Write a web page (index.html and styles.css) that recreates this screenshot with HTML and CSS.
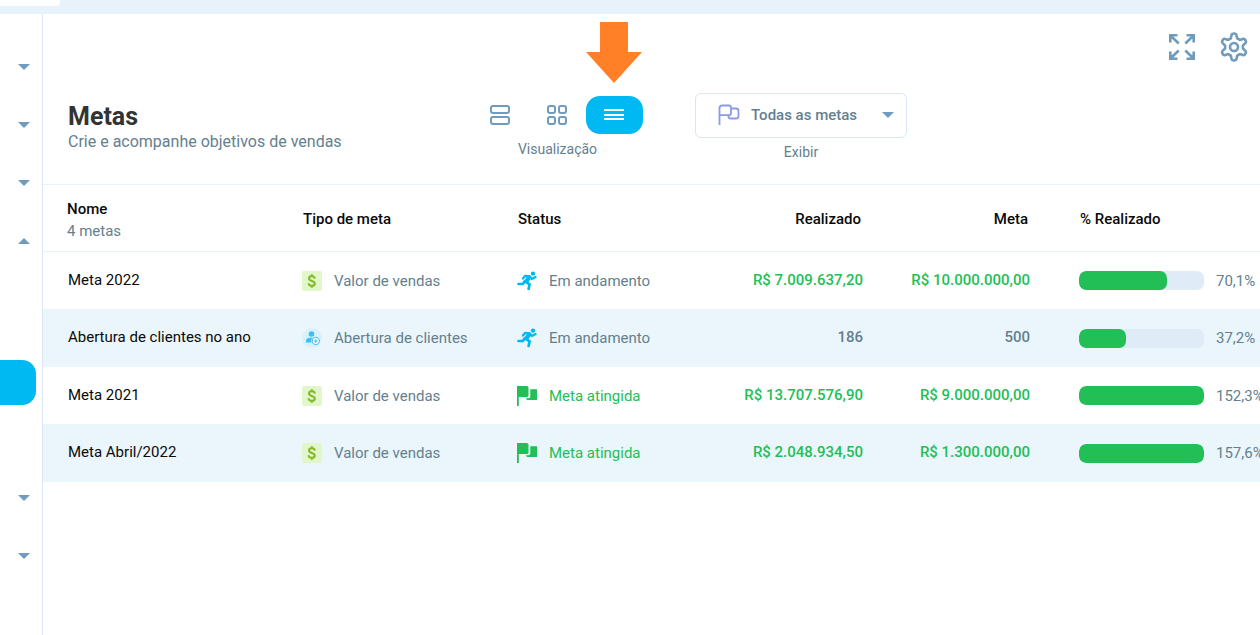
FILE: index.html
```html
<!DOCTYPE html>
<html lang="pt-BR">
<head>
<meta charset="utf-8">
<title>Metas</title>
<meta name="viewport" content="width=device-width, initial-scale=1">
<link rel="stylesheet" href="styles.css">
</head>
<body>
<svg class="sprite" aria-hidden="true">
  <symbol id="caret" viewBox="0 0 12 6"><path d="M0 0h12L6 6z" fill="#6f9cbc"/></symbol>
  <symbol id="money" viewBox="0 0 20 20"><rect width="20" height="20" rx="2" fill="#e2f7c9"/><path d="M12.800 7.600C12.700 6 11.500 5.200 9.800 5.200S7 6.100 7 7.500C7 10.500 12.800 9.300 12.800 12.500c0 1.500-1.300 2.400-3 2.400s-3.100-.9-3.200-2.600M9.800 3.300v2M9.800 14.800v2" fill="none" stroke="#83b92c" stroke-width="2.100"/></symbol>
  <symbol id="client" viewBox="0 0 20 20"><circle cx="10" cy="10" r="10" fill="#d9f1fd"/><circle cx="9.500" cy="6" r="2.800" fill="#3fbef5"/><path d="M4 14.500v-2C4 10.600 6 9.700 8 9.700h3c1.500 0 3 1 3 2.500v2.300z" fill="#3fbef5"/><circle cx="13.800" cy="13" r="4.600" fill="#e6f6fe"/><circle cx="13.800" cy="13" r="3.700" fill="#fff" stroke="#3fbef5"/><path d="M13.800 11v4M11.800 13h4" stroke="#3fbef5"/></symbol>
  <symbol id="run" viewBox="0 0 20 20"><circle cx="16" cy="2.600" r="2.200" fill="#00b9f2"/><path d="M6 7.500 8.300 4.800 12.500 5.600 14.800 8 18.500 6" fill="none" stroke="#00b9f2" stroke-width="2.300" stroke-linecap="round" stroke-linejoin="round"/><path d="M12.300 6.200 9.300 10.500" stroke="#00b9f2" stroke-width="4.200" stroke-linecap="round"/><path d="M8.800 10.700 12.600 13.300 11.600 18M7.500 10.500 5.800 13H1.500" fill="none" stroke="#00b9f2" stroke-width="2.700" stroke-linecap="round" stroke-linejoin="round"/></symbol>
  <symbol id="flags" viewBox="0 0 20 20"><path d="M0 0h10Q11.500 .3 11.500 2v7.500q0 1.500-1.500 1.500H1.800v9H0zM13.300 3.300H20V14H10.500Q9 14 9 12.300h2.300q2 0 2-2z" fill="#21bf56"/></symbol>
</svg>

<div class="topbar"><div class="topbar-tab"></div></div>

<div class="shell">
  <nav class="sidebar" aria-label="Menu">
    <button class="nav-item" aria-label="Abrir menu 1"><svg class="caret"><use href="#caret"/></svg></button>
    <button class="nav-item" aria-label="Abrir menu 2"><svg class="caret"><use href="#caret"/></svg></button>
    <button class="nav-item" aria-label="Abrir menu 3"><svg class="caret"><use href="#caret"/></svg></button>
    <button class="nav-item" aria-label="Fechar menu 4" aria-expanded="true"><svg class="caret caret-up"><use href="#caret"/></svg></button>
    <div class="submenu"><a class="submenu-current" href="#" aria-label="Metas" aria-current="page"></a></div>
    <button class="nav-item" aria-label="Abrir menu 5"><svg class="caret"><use href="#caret"/></svg></button>
    <button class="nav-item" aria-label="Abrir menu 6"><svg class="caret"><use href="#caret"/></svg></button>
  </nav>

  <main class="main">
    <header class="page-header">
      <div class="tools">
        <button class="tool" aria-label="Tela cheia">
          <svg width="26" height="28" viewBox="0 0 26 28" fill="none" stroke="#6f9cbc" stroke-width="2.600"><path d="M1.300 9.500V2.300h7.200M1.700 2.700l8 7.800M17.500 2.300h7.200v7.200M24.300 2.700l-8 7.800M1.300 18.500v7.200h7.200M1.700 25.300l8-7.800M17.500 25.700h7.200v-7.200M24.300 25.300l-8-7.800"/></svg>
        </button>
        <button class="tool" aria-label="Configurações">
          <svg width="28" height="30" viewBox="0 0 28 30" fill="none" stroke="#6f9cbc" stroke-width="2.600" stroke-linejoin="round"><path d="M11.500 3.200Q11.800 1.500 14 1.500t2.500 1.700L17.200 6.400 19.800 7.900 22.800 6.900Q24.500 6.400 25.500 8.300T25.200 11.400L22.900 13.500V16.500L25.200 18.600Q26.500 19.800 25.500 21.700T22.800 23.100L19.800 22.100 17.200 23.600 16.500 26.800Q16.200 28.500 14 28.500t-2.500-1.700L10.800 23.600 8.200 22.100 5.200 23.100Q3.500 23.600 2.500 21.700T2.800 18.600L5.100 16.500V13.500L2.800 11.400Q1.500 10.200 2.500 8.300T5.200 6.900L8.200 7.900 10.800 6.400z"/><circle cx="14" cy="15" r="4"/></svg>
        </button>
      </div>
      <div class="heading-row">
        <div class="heading">
          <h1>Metas</h1>
          <p>Crie e acompanhe objetivos de vendas</p>
        </div>
        <div class="view-group" role="group" aria-labelledby="view-label">
          <div class="view-buttons">
            <button class="view" aria-label="Cartões">
              <svg width="20" height="20" viewBox="0 0 20 20" fill="none" stroke="#6f9cbc" stroke-width="2"><rect x="1" y="1" width="18" height="7" rx="2"/><rect x="1" y="12" width="18" height="7" rx="2"/></svg>
            </button>
            <button class="view" aria-label="Grade">
              <svg width="20" height="20" viewBox="0 0 20 20" fill="none" stroke="#6f9cbc" stroke-width="2"><rect x="1" y="1" width="7" height="7" rx="2"/><rect x="12" y="1" width="7" height="7" rx="2"/><rect x="1" y="12" width="7" height="7" rx="2"/><rect x="12" y="12" width="7" height="7" rx="2"/></svg>
            </button>
            <button class="view view-active" aria-label="Lista" aria-pressed="true">
              <svg width="20" height="12" viewBox="0 0 20 12" fill="#fff"><path d="M0 0h20v2H0zM0 5h20v2H0zM0 9h20v2H0z"/></svg>
              <svg class="pointer" width="56" height="61" viewBox="0 0 56 61" aria-hidden="true"><path d="M14 0h28v30h14L28 61 0 30h14z" fill="#ff8026"/></svg>
            </button>
          </div>
          <span class="caption" id="view-label">Visualização</span>
        </div>
        <div class="filter">
          <div class="select-box">
            <select id="show"><option>Todas as metas</option></select>
            <svg class="select-flag" width="22" height="22" viewBox="0 0 22 22" fill="none" stroke="#8c9be8" stroke-width="1.800"><path d="M1.500 21V4Q1.500 1.500 4 1.500h7Q13 1.500 13 3.500V9q0 2.200-2.200 2.200H1.500M13 4.500h5Q20.500 4.500 20.500 7v5q0 2.500-2.500 2.500h-5.500Q10.500 14.500 10.500 12.500v-1.300"/></svg>
            <svg class="caret select-caret"><use href="#caret"/></svg>
          </div>
          <label class="caption" for="show">Exibir</label>
        </div>
      </div>
    </header>

    <table class="goals">
      <colgroup><col class="col-name"><col class="col-type"><col class="col-status"><col class="col-done"><col class="col-goal"><col></colgroup>
      <thead>
        <tr><th>Nome<span class="count">4 metas</span></th><th>Tipo de meta</th><th>Status</th><th class="number">Realizado</th><th class="number">Meta</th><th class="percent">% Realizado</th></tr>
      </thead>
      <tbody>
        <tr>
          <td>Meta 2022</td>
          <td><div class="tag"><svg class="icon"><use href="#money"/></svg>Valor de vendas</div></td>
          <td><div class="tag"><svg class="icon"><use href="#run"/></svg>Em andamento</div></td>
          <td class="number money">R$ 7.009.637,20</td><td class="number money">R$ 10.000.000,00</td>
          <td class="percent"><div class="tag"><div class="bar"><div class="bar-fill" style="width:70.1%"></div></div>70,1%</div></td>
        </tr>
        <tr>
          <td>Abertura de clientes no ano</td>
          <td><div class="tag"><svg class="icon"><use href="#client"/></svg>Abertura de clientes</div></td>
          <td><div class="tag"><svg class="icon"><use href="#run"/></svg>Em andamento</div></td>
          <td class="number">186</td><td class="number">500</td>
          <td class="percent"><div class="tag"><div class="bar"><div class="bar-fill" style="width:37.2%"></div></div>37,2%</div></td>
        </tr>
        <tr>
          <td>Meta 2021</td>
          <td><div class="tag"><svg class="icon"><use href="#money"/></svg>Valor de vendas</div></td>
          <td><div class="tag reached"><svg class="icon"><use href="#flags"/></svg>Meta atingida</div></td>
          <td class="number money">R$ 13.707.576,90</td><td class="number money">R$ 9.000.000,00</td>
          <td class="percent"><div class="tag"><div class="bar"><div class="bar-fill" style="width:100%"></div></div>152,3%</div></td>
        </tr>
        <tr>
          <td>Meta Abril/2022</td>
          <td><div class="tag"><svg class="icon"><use href="#money"/></svg>Valor de vendas</div></td>
          <td><div class="tag reached"><svg class="icon"><use href="#flags"/></svg>Meta atingida</div></td>
          <td class="number money">R$ 2.048.934,50</td><td class="number money">R$ 1.300.000,00</td>
          <td class="percent"><div class="tag"><div class="bar"><div class="bar-fill" style="width:100%"></div></div>157,6%</div></td>
        </tr>
      </tbody>
    </table>
  </main>
</div>
</body>
</html>
```
FILE: styles.css
```css
* { box-sizing: border-box; }

body {
  margin: 0;
  min-height: 100vh;
  display: flex;
  flex-direction: column;
  background: #fff;
  color: #0a0a0a;
  font: 15px/20px Roboto, sans-serif;
  overflow-x: hidden;
}

button { padding: 0; border: 0; background: none; cursor: pointer; }
svg { display: block; flex: none; }
.sprite { position: absolute; width: 0; height: 0; }

.topbar { height: 14px; background: #e8f2fa; }
.topbar-tab { width: 60px; height: 6px; background: #fff; border-radius: 0 0 4px 0; }

.shell { flex: 1; display: flex; }

.sidebar {
  flex: none;
  width: 43px;
  padding-top: 24px;
  border-right: 1px solid #d9e7f4;
}
.nav-item {
  display: flex;
  align-items: center;
  justify-content: flex-end;
  width: 100%;
  height: 58px;
  padding-right: 12px;
}
.caret { width: 12px; height: 6px; }
.caret-up { transform: rotate(180deg); }
.submenu { padding: 90px 6px 64px 0; }
.submenu-current { display: block; height: 45px; background: #00b9f2; border-radius: 0 14px 14px 0; }

.main { flex: 1; min-width: 0; overflow: hidden; }

.page-header { padding: 18px 12px 0 25px; }
.tools { display: flex; justify-content: flex-end; align-items: center; gap: 25px; height: 30px; }

.heading-row { display: flex; align-items: flex-start; height: 91px; margin-top: 31px; }
.heading { flex: 0 1 404px; padding-top: 9px; }
.heading h1 { margin: 0; font-size: 25px; line-height: 30px; font-weight: 700; color: #333; }
.heading p { margin: 0; font-size: 16px; line-height: 20px; color: #64808f; }

.caption { font-size: 14px; line-height: 20px; color: #64808f; text-align: center; }

.view-group { display: flex; flex-direction: column; gap: 5px; padding-top: 3px; }
.view-buttons { display: flex; }
.view { position: relative; display: flex; align-items: center; justify-content: center; width: 57px; height: 38px; padding-right: 2px; border-radius: 14px; }
.view-active { background: #00b9f2; }
.pointer { position: absolute; left: 0; bottom: 51px; }

.filter { display: flex; flex-direction: column; gap: 4px; margin-left: 52px; }
.select-box { position: relative; }
.select-box select {
  appearance: none;
  width: 212px;
  height: 45px;
  padding: 0 40px 2px 55px;
  border: 1px solid #d9e7f4;
  border-radius: 6px;
  background: #fff;
  color: #64808f;
  font: 500 15px/20px Roboto, sans-serif;
}
.select-flag { position: absolute; left: 23px; top: 11px; pointer-events: none; }
.select-caret { position: absolute; right: 13px; top: 19px; pointer-events: none; }

.goals { width: 100%; min-width: 1230px; table-layout: fixed; border-collapse: separate; border-spacing: 0; }
.col-name { width: 259px; }
.col-type { width: 215px; }
.col-status { width: 170px; }
.col-done { width: 176px; }
.col-goal { width: 167px; }

.goals th, .goals td { padding: 0; white-space: nowrap; vertical-align: middle; text-align: left; }
.goals td { padding-bottom: 2px; }
.goals td:has(.tag) { padding-bottom: 0; }
.goals th { height: 68px; padding: 2px 2px 0 1px; border-top: 1px solid #e8f2fa; border-bottom: 1px solid #e8f2fa; font-weight: 500; }
.goals th:first-child { padding-top: 4px; padding-left: 24px; }
.goals td:first-child { padding-left: 25px; }
.count { display: block; margin-top: 2px; font-weight: 400; color: #64808f; }
.goals .number { text-align: right; }
.goals td.percent { padding-left: 49px; }
.goals th.percent { padding-left: 50px; }

.goals tbody tr { height: 57px; }
.goals tbody tr:nth-child(even) { height: 58px; background: #eaf6fb; }
.goals td.number { font-weight: 500; color: #64808f; }
.goals td.money { color: #21bf56; }

.tag { display: flex; align-items: center; gap: 12px; color: #64808f; }
.reached { color: #21bf56; }
.icon { width: 20px; height: 20px; }
.bar { flex: none; width: 125px; height: 19px; border-radius: 7px; background: #dfebf6; overflow: hidden; }
.bar-fill { height: 100%; border-radius: 7px; background: #21bf56; }
```
